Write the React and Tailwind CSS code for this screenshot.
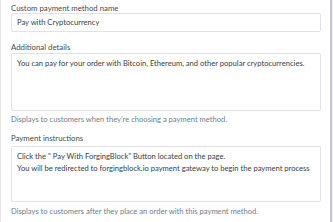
export default function App() {
  return (
    <div
      className="w-[333px] h-[222px] overflow-hidden bg-white flex"
      style={{ fontFamily: "Lato, 'Open Sans', sans-serif" }}
    >
      <div className="w-[1px] bg-[#e3e5e8]" />
      <div className="flex-1 pl-[10px] pr-[9px] text-[7.8px] text-[#454b50]">
        <div className="pt-[3px] leading-[10px]">Custom payment method name</div>
        <div className="h-[19px] border border-[#dfe2e6] rounded-[2px] px-[5px] flex items-center text-[7.6px] text-[#383e43]">
          Pay with Cryptocurrency
        </div>

        <div className="mt-[10px] leading-[10px]">Additional details</div>
        <div className="mt-[1px] h-[58px] border border-[#dfe2e6] rounded-[2px] px-[5px] pt-[3px] leading-[12px] text-[7.6px] text-[#383e43]">
          You can pay for your order with Bitcoin, Ethereum, and other popular cryptocurrencies.
        </div>
        <div className="mt-[3px] leading-[10px] text-[7.6px] text-[#6c808d]">
          Displays to customers when they’re choosing a payment method.
        </div>

        <div className="mt-[9px] leading-[10px]">Payment instructions</div>
        <div className="mt-[3px] h-[56px] border border-[#dfe2e6] rounded-[2px] px-[5px] pt-[3px] leading-[12px] text-[7.6px] text-[#383e43]">
          <div>Click the " Pay With ForgingBlock" Button located on the page.</div>
          <div>You will be redirected to forgingblock.io payment gateway to begin the payment process</div>
        </div>
        <div className="mt-[4px] leading-[10px] text-[7.6px] text-[#6c808d]">
          Displays to customers after they place an order with this payment method.
        </div>
      </div>
      <div className="w-[2px] bg-[#c4c8cc]" />
      <div className="w-[1px] bg-[#eef0f2]" />
    </div>
  );
}
